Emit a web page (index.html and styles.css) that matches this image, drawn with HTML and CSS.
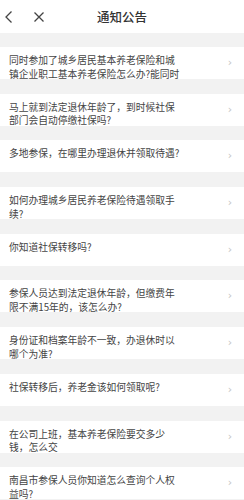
FILE: index.html
```html
<!DOCTYPE html>
<html lang="zh">
<head>
    <meta charset="utf-8">
    <title>通知公告</title>
    <meta name="viewport" content="width=device-width, initial-scale=1.0">
    <link rel="stylesheet" href="styles.css">
</head>
<body>

    <!-- Top bar -->
    <div class="topbar">
        <div class="topbar-icons">
            <svg class="icon-back" width="10" height="14" viewBox="0 0 10 14">
                <polyline points="7.5,1.5 2,7 7.5,12.5" fill="none" stroke="#444" stroke-width="1.3"/>
            </svg>
            <svg class="icon-close" width="12" height="12" viewBox="0 0 12 12">
                <path d="M1.5 1.5 L10.5 10.5 M10.5 1.5 L1.5 10.5" fill="none" stroke="#444" stroke-width="1.3"/>
            </svg>
        </div>
        <h1>通知公告</h1>
    </div>

    <ul class="notice-list">
        <li class="notice-item"><span class="notice-text">同时参加了城乡居民基本养老保险和城镇企业职工基本养老保险怎么办?能同时</span><span class="arrow">›</span></li>
        <li class="notice-item"><span class="notice-text">马上就到法定退休年龄了，到时候社保部门会自动停缴社保吗?</span><span class="arrow">›</span></li>
        <li class="notice-item"><span class="notice-text">多地参保，在哪里办理退休并领取待遇?</span><span class="arrow">›</span></li>
        <li class="notice-item"><span class="notice-text">如何办理城乡居民养老保险待遇领取手续?</span><span class="arrow">›</span></li>
        <li class="notice-item"><span class="notice-text">你知道社保转移吗?</span><span class="arrow">›</span></li>
        <li class="notice-item"><span class="notice-text">参保人员达到法定退休年龄，但缴费年限不满15年的，该怎么办?</span><span class="arrow">›</span></li>
        <li class="notice-item"><span class="notice-text">身份证和档案年龄不一致，办退休时以哪个为准?</span><span class="arrow">›</span></li>
        <li class="notice-item"><span class="notice-text">社保转移后，养老金该如何领取呢?</span><span class="arrow">›</span></li>
        <li class="notice-item"><span class="notice-text">在公司上班，基本养老保险要交多少钱，怎么交</span><span class="arrow">›</span></li>
        <li class="notice-item"><span class="notice-text">南昌市参保人员你知道怎么查询个人权<br>益吗?</span><span class="arrow">›</span></li>
    </ul>

</body>
</html>
```

FILE: styles.css
```css
body {
    margin: 0;
    background-color: #f2f2f2;
    color: #333;
    font-family: "Noto Sans CJK SC", "Liberation Sans", sans-serif;
    overflow: hidden;
}

/* Top bar */
.topbar {
    position: relative;
    height: 33px;
    background: #fff;
    display: flex;
    align-items: center;
    justify-content: center;
}

.topbar-icons {
    position: absolute;
    left: 4px;
    top: 0;
    height: 33px;
    display: flex;
    align-items: center;
    gap: 19px;
}

.topbar h1 {
    margin: 0;
    font-size: 12.5px;
    font-weight: 500;
    color: #333;
}

/* Notice list */
.notice-list {
    list-style: none;
    margin: 0;
    padding: 14px 0 0;
    display: flex;
    flex-direction: column;
    gap: 14.7px;
}

.notice-item {
    height: 32px;
    background: #fff;
    display: flex;
    align-items: flex-start;
    justify-content: space-between;
    padding: 0 9px;
}

.notice-text {
    width: 174px;
    padding-top: 7px;
    font-size: 9.75px;
    line-height: 13.5px;
    color: #444;
}

.arrow {
    width: 10px;
    padding-top: 7px;
    font-family: "DejaVu Sans", sans-serif;
    font-size: 11px;
    line-height: 18px;
    color: #c4c4c4;
    text-align: center;
}
```
